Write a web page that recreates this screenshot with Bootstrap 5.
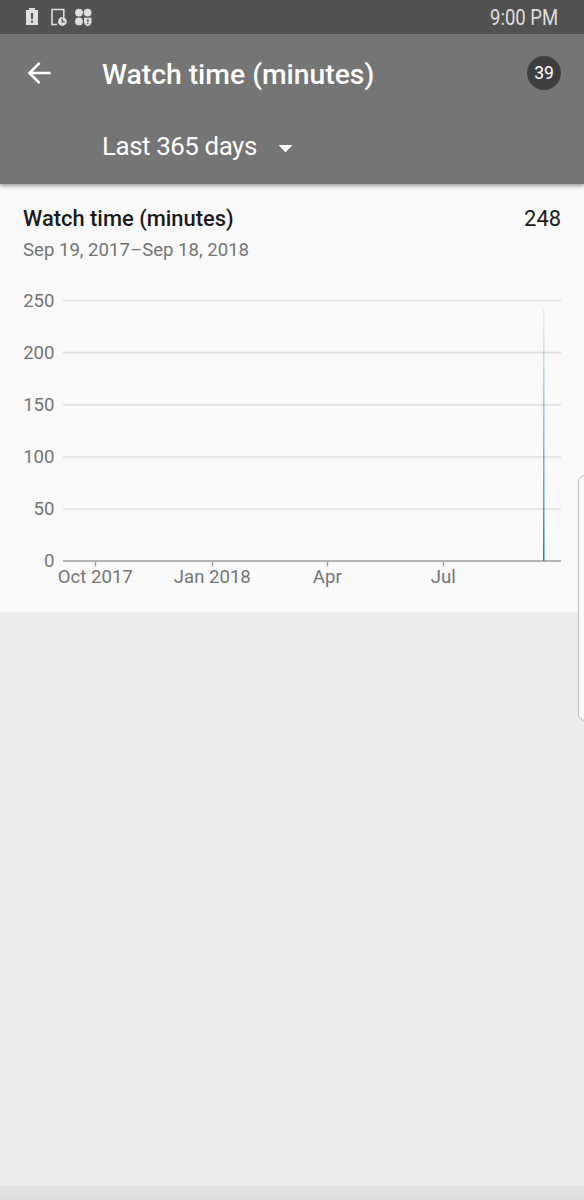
<!DOCTYPE html>
<html lang="en">
<head>
<meta charset="utf-8">
<meta name="viewport" content="width=device-width, initial-scale=1">
<title>Watch time (minutes)</title>
<link href="https://cdn.jsdelivr.net/npm/bootstrap@5.3.0/dist/css/bootstrap.min.css" rel="stylesheet">
<style>
body{font-family:Roboto,"Liberation Sans",sans-serif;background:#ededed;min-height:1200px;overflow:hidden}
.statusbar{height:34px;background:#525252;padding:0 26px 0 25px}
.clock{font-size:21.5px;line-height:34px;padding-top:2px;color:#dedede;transform:scaleX(.86);transform-origin:right}
.appbar{height:150px;background:#757575;box-shadow:0 2px 4px rgba(0,0,0,.38);clip-path:inset(0 0 -8px 0);z-index:2}
.toolbar-row{height:78px;padding:0 23px 0 26px}
.page-title{font-size:28.3px;font-weight:500;margin-left:50px;line-height:32px;padding-top:3px}
.count{width:34px;height:34px;background:#3f3f3f;font-size:17.5px}
.period{font-size:25.9px;line-height:32px;padding:18px 0 0 102px;gap:21px}
.period-name{letter-spacing:-.43px}
.caret-icon{margin-top:5px}
.report{height:428px;background:#fafafa;padding:21px 23px 0}
.report-title{font-size:21.9px;line-height:28px;color:#1b1b1b}
.report-name{font-weight:500}
.range{font-size:18.6px;line-height:24px;margin-top:5px;color:#757575}
.chart text{font-size:18.6px;fill:#757575}
.edge-handle{right:-8px;top:475px;width:14px;height:246px;background:#fafafa;border:1px solid #bbb;border-radius:7px;z-index:3}
.bottom-edge{height:15px;background:linear-gradient(#e5e5e5,#dedede)}
</style>
</head>
<body class="position-relative d-flex flex-column">
<header class="statusbar d-flex align-items-center justify-content-between">
  <svg width="68" height="20" viewBox="25 7 68 20" fill="#dedede">
    <path d="M26 10h3V8h6v2h3v15H26z"/>
    <path d="M31 13h2v6h-2zM31 20.500h2v2h-2z" fill="#525252"/>
    <path d="M57 24.500H52V9.500H63.800V17" fill="none" stroke="#dedede" stroke-width="1.600"/>
    <circle cx="62.400" cy="21.500" r="4.400"/>
    <path d="M62.200 18.800v3h2.500" fill="none" stroke="#525252" stroke-width="1.300"/>
    <circle cx="79" cy="12.600" r="3.900"/><circle cx="87.600" cy="12.600" r="3.900"/><circle cx="79" cy="21.400" r="3.900"/>
    <path d="M84 17.800h7.500v4q0 3.200-3.750 4.500Q84 25 84 21.800z"/>
    <path d="M87.100 19.300h1.500v2.800h-1.500zM87.100 23h1.500v1.200h-1.500z" fill="#525252"/>
  </svg>
  <span class="clock">9:00 PM</span>
</header>
<div class="appbar position-relative text-white">
  <div class="toolbar-row d-flex align-items-center">
    <svg width="26" height="26" viewBox="0 0 26 26" fill="none" stroke="#fff" stroke-width="2.600"><path d="M24.500 13H3.500M13.600 2.800L3.400 13l10.200 10.200"/></svg>
    <h1 class="page-title mb-0">Watch time (minutes)</h1>
    <span class="count rounded-circle d-flex align-items-center justify-content-center ms-auto">39</span>
  </div>
  <div class="period d-flex align-items-center"><span class="period-name">Last 365 days</span>
    <svg class="caret-icon" width="15" height="8" viewBox="0 0 15 8"><path d="M.5 0h14l-7 7.500z" fill="#fff"/></svg>
  </div>
</div>
<main class="report">
  <div class="report-title d-flex justify-content-between"><span class="report-name">Watch time (minutes)</span><span>248</span></div>
  <div class="range">Sep 19, 2017–Sep 18, 2018</div>
  <svg class="chart d-block" width="538" height="330" viewBox="23 262 538 330">
    <defs><linearGradient id="spike" x1="0" y1="308" x2="0" y2="561" gradientUnits="userSpaceOnUse"><stop offset="0" stop-color="#3d9bc0" stop-opacity=".2"/><stop offset=".4" stop-color="#3d9bc0" stop-opacity=".75"/><stop offset="1" stop-color="#168ab4"/></linearGradient></defs>
    <path d="M63 300.700H561M63 352.700H561M63 404.900H561M63 457H561M63 509H561" stroke="#e0e0e0" stroke-width="1.700"/>
    <path d="M63 561H561" stroke="#9e9e9e" stroke-width="1.700"/>
    <path d="M95.500 562v4.500M212.500 562v4.500M327.500 562v4.500M443.500 562v4.500" stroke="#9e9e9e" stroke-width="1.300"/>
    <path d="M543 561L543.500 308H544.300L544.500 561z" fill="url(#spike)"/>
    <g text-anchor="end"><text x="54.500" y="307">250</text><text x="54.500" y="359">200</text><text x="54.500" y="411">150</text><text x="54.500" y="463">100</text><text x="54.500" y="515">50</text><text x="54.500" y="567">0</text></g>
    <g text-anchor="middle"><text x="95.300" y="583">Oct 2017</text><text x="212.300" y="583">Jan 2018</text><text x="327.300" y="583">Apr</text><text x="443.300" y="583">Jul</text></g>
  </svg>
</main>
<div class="edge-handle position-absolute"></div>
<div class="bottom-edge mt-auto"></div>
<script src="https://cdn.jsdelivr.net/npm/bootstrap@5.3.0/dist/js/bootstrap.bundle.min.js"></script>
</body>
</html>
